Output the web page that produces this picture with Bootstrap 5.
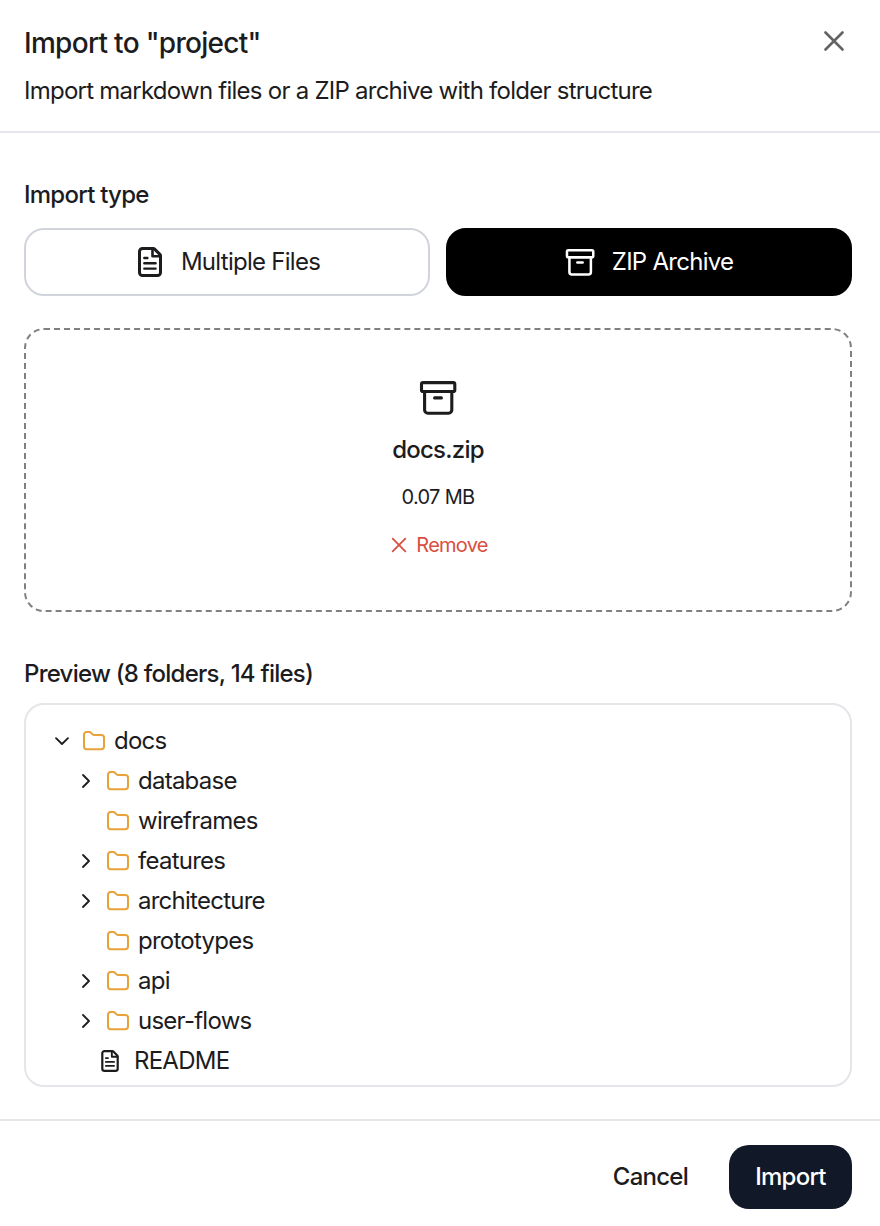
<!DOCTYPE html>
<html lang="en">
<head>
<meta charset="utf-8">
<meta name="viewport" content="width=device-width, initial-scale=1">
<title>Import to "project"</title>
<link href="https://cdn.jsdelivr.net/npm/bootstrap@5.3.0/dist/css/bootstrap.min.css" rel="stylesheet">
<style>
  body { font-family: Inter, "Liberation Sans", sans-serif; font-size: 24px; line-height: 32px; color: #1c1c1e; letter-spacing: -.75px; background: #fff; }
  .dialog { height: 1226px; }
  .dialog-head { height: 133px; padding: 24px 24px 0; border-bottom: 2px solid #e5e5ea; }
  .dialog-title { font-size: 28px; line-height: 38px; font-weight: 500; letter-spacing: -.7px; }
  .dialog-sub { margin-top: 13px; }
  .close-btn { width: 36px; height: 36px; color: #636363; margin-top: -1px; }
  .dialog-body { padding: 46px 28px 0 24px; }
  .section-label { font-weight: 500; font-size: 24px; line-height: 32px; }
  .choice { height: 68px; border: 2px solid #d1d5db; border-radius: 20px; font: inherit; letter-spacing: -.73px; color: inherit; background: #fff; }
  .choice.selected { background: #000; border-color: #000; color: #fff; }
  .choice-files { padding-left: 10px; gap: 19px; }
  .choice-zip { gap: 17px; }
  .choice-row { margin-top: 17px; gap: 16px; }
  .drop-zone { height: 284px; margin-top: 32px; border: 2px dashed #808080; border-radius: 20px; padding-top: 51px; }
  .file-name { font-weight: 500; margin-top: 19px; letter-spacing: -.75px; }
  .file-size { font-size: 20px; margin-top: 15px; letter-spacing: -.65px; }
  .remove-btn { font-size: 20px; color: #d94f40; margin-top: 17px; margin-left: 3px; letter-spacing: -.75px; gap: 9px; }
  .preview-label { margin-top: 46px; }
  .tree { height: 384px; margin-top: 13px; border: 2px solid #e5e5ea; border-radius: 20px; padding: 16px 28px; overflow: hidden; }
  .tree-row { height: 40px; letter-spacing: -.75px; }
  .nested { padding-left: 24px; }
  .chev { width: 16px; height: 16px; margin-right: 12px; }
  .folder { width: 24px; height: 20px; margin-right: 8px; color: #e9a23b; }
  .readme { padding-left: 23px; gap: 15px; }
  .dialog-foot { height: 107px; border-top: 2px solid #e5e5ea; padding: 7px 28px 0 0; margin-top: 32px; gap: 41px; font-weight: 500; }
  .import-btn { width: 123px; height: 64px; border-radius: 20px; background: #111827; letter-spacing: inherit; }
  svg { display: block; flex: none; fill: none; stroke: currentColor; stroke-linecap: round; stroke-linejoin: round; }
</style>
</head>
<body>
<svg width="0" height="0" class="position-absolute">
  <defs>
    <symbol id="doc" viewBox="0 0 24 30">
      <path d="M4.5 1.5H15.2a2 2 0 0 1 1.4.6L21.9 7.4a2 2 0 0 1 .6 1.4V25.5a3 3 0 0 1-3 3H4.5a3 3 0 0 1-3-3V4.5A3 3 0 0 1 4.5 1.5Z" stroke-width="3"/>
      <path d="M14.5 1.8V9.3H22.2" stroke-width="2.6"/>
      <path d="M6.3 11H9.4M6.3 16.3H17.6M6.3 21.6H17.6" stroke-width="2.4"/>
    </symbol>
    <symbol id="archive" viewBox="0 0 38 34">
      <rect x="2.5" y="1.6" width="33.3" height="8.9" rx="1.6"/>
      <path d="M5.6 11V29a3.2 3.2 0 0 0 3.2 3.2H29.6a3.2 3.2 0 0 0 3.2-3.2V11M15.6 16.9H22.4"/>
    </symbol>
    <symbol id="folder" viewBox="0 0 24 20">
      <path d="M2 3.6A2.6 2.6 0 0 1 4.6 1H7.4a2.4 2.4 0 0 1 1.8.8L10.3 3.1a2.2 2.2 0 0 0 1.6.8H19.4A2.6 2.6 0 0 1 22 6.5V15.6A2.6 2.6 0 0 1 19.4 18.2H4.6A2.6 2.6 0 0 1 2 15.6Z" stroke-width="2"/>
    </symbol>
    <symbol id="right" viewBox="0 0 16 16"><path d="M5 2L11 8L5 14" stroke-width="1.8"/></symbol>
    <symbol id="down" viewBox="0 0 16 16"><path d="M2 5.2L8 11L14 5.2" stroke-width="1.8"/></symbol>
  </defs>
</svg>
<main class="dialog d-flex flex-column">
  <header class="dialog-head d-flex justify-content-between align-items-start">
    <div>
      <h1 class="dialog-title m-0">Import to "project"</h1>
      <p class="dialog-sub mb-0">Import markdown files or a ZIP archive with folder structure</p>
    </div>
    <button class="close-btn btn p-0 border-0 d-flex align-items-center justify-content-center me-1" aria-label="Close">
      <svg width="20" height="20" viewBox="0 0 20 20"><path d="M1.5 1.5L18.5 18.5M18.5 1.5L1.5 18.5" stroke-width="2.6"/></svg>
    </button>
  </header>
  <section class="dialog-body">
    <h2 class="section-label m-0">Import type</h2>
    <div class="choice-row d-flex">
      <button class="choice choice-files flex-fill w-50 d-flex align-items-center justify-content-center">
        <svg width="24" height="30"><use href="#doc"/></svg><span>Multiple Files</span>
      </button>
      <button class="choice choice-zip selected flex-fill w-50 d-flex align-items-center justify-content-center">
        <svg width="30" height="27" stroke-width="3.2"><use href="#archive"/></svg><span>ZIP Archive</span>
      </button>
    </div>
    <div class="drop-zone d-flex flex-column align-items-center">
      <svg width="38" height="34" stroke-width="3.1"><use href="#archive"/></svg>
      <div class="file-name">docs.zip</div>
      <div class="file-size">0.07 MB</div>
      <button class="remove-btn btn p-0 border-0 d-flex align-items-center">
        <svg width="16" height="16" viewBox="0 0 16 16"><path d="M1.7 1.7L14.3 14.3M14.3 1.7L1.7 14.3" stroke-width="1.8"/></svg>Remove
      </button>
    </div>
    <h2 class="section-label preview-label mb-0">Preview (8 folders, 14 files)</h2>
    <div class="tree">
      <div class="tree-row d-flex align-items-center"><svg class="chev"><use href="#down"/></svg><svg class="folder"><use href="#folder"/></svg><span>docs</span></div>
      <div class="nested">
        <div class="tree-row d-flex align-items-center"><svg class="chev"><use href="#right"/></svg><svg class="folder"><use href="#folder"/></svg><span>database</span></div>
        <div class="tree-row d-flex align-items-center"><span class="chev"></span><svg class="folder"><use href="#folder"/></svg><span>wireframes</span></div>
        <div class="tree-row d-flex align-items-center"><svg class="chev"><use href="#right"/></svg><svg class="folder"><use href="#folder"/></svg><span>features</span></div>
        <div class="tree-row d-flex align-items-center"><svg class="chev"><use href="#right"/></svg><svg class="folder"><use href="#folder"/></svg><span>architecture</span></div>
        <div class="tree-row d-flex align-items-center"><span class="chev"></span><svg class="folder"><use href="#folder"/></svg><span>prototypes</span></div>
        <div class="tree-row d-flex align-items-center"><svg class="chev"><use href="#right"/></svg><svg class="folder"><use href="#folder"/></svg><span>api</span></div>
        <div class="tree-row d-flex align-items-center"><svg class="chev"><use href="#right"/></svg><svg class="folder"><use href="#folder"/></svg><span>user-flows</span></div>
        <div class="tree-row readme d-flex align-items-center"><svg width="18" height="22"><use href="#doc"/></svg><span>README</span></div>
      </div>
    </div>
  </section>
  <footer class="dialog-foot d-flex align-items-center justify-content-end">
    <span>Cancel</span>
    <button class="import-btn border-0 text-white p-0 fw-medium">Import</button>
  </footer>
</main>
<script src="https://cdn.jsdelivr.net/npm/bootstrap@5.3.0/dist/js/bootstrap.bundle.min.js"></script>
</body>
</html>
